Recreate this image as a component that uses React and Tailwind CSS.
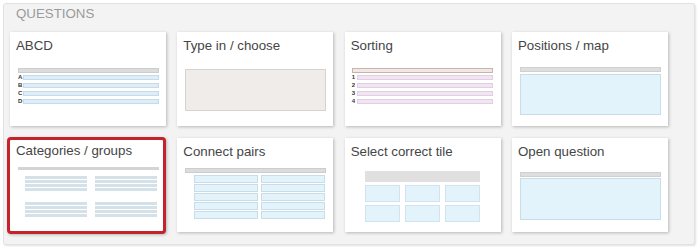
const FONT = { fontFamily: '"Liberation Sans", Arial, sans-serif' };

function Card({ title, selected, children }) {
  return (
    <div
      className={
        selected
          ? "ml-[-3px] mt-[-1px] w-[159px] h-[97px] bg-white border-[3px] border-[#c4232b] rounded-[4px] shadow-[1px_1px_3px_rgba(0,0,0,0.25)]"
          : "h-[94px] bg-white shadow-[1px_1px_3px_rgba(0,0,0,0.25)]"
      }
    >
      <div className={`pl-[6px] ${selected ? "pt-[3px]" : "pt-[6px]"} text-[13.3px] leading-[16px] text-[#454545]`}>
        {title}
      </div>
      {children}
    </div>
  );
}

function Rows({ labels, fill }) {
  return (
    <div className="flex flex-col gap-[3px] mt-[2px]">
      {labels.map((l) => (
        <div key={l} className="flex items-center h-[5px]">
          <span className="w-[5px] text-[6px] leading-[5px] font-bold text-[#333]">{l}</span>
          <div className={`flex-1 h-[5px] border ${fill}`} />
        </div>
      ))}
    </div>
  );
}

function Abcd() {
  return (
    <div className="ml-[8px] w-[141px] mt-[14px]">
      <div className="h-[5px] bg-[#dcdcdc] border border-[#cdcdcd]" />
      <Rows labels={["A", "B", "C", "D"]} fill="bg-[#deedf8] border-[#c6dbe9]" />
    </div>
  );
}

function TypeIn() {
  return <div className="ml-[8px] w-[141px] mt-[15px] h-[42px] bg-[#f0ece9] border border-[#d6d2ce]" />;
}

function Sorting() {
  return (
    <div className="ml-[7px] w-[141px] mt-[14px]">
      <div className="h-[5px] bg-[#efe9e6] border border-[#c9b3aa]" />
      <Rows labels={["1", "2", "3", "4"]} fill="bg-[#f2e4f2] border-[#dfcfe0]" />
    </div>
  );
}

function Positions() {
  return (
    <div className="ml-[8px] w-[141px] mt-[13px]">
      <div className="h-[5px] bg-[#dedede] border border-[#d0d0d0]" />
      <div className="mt-[2px] h-[41px] bg-[#e3f3fc] border border-[#c9dde9]" />
    </div>
  );
}

function Group() {
  return (
    <div className="flex flex-col gap-[1px] w-[62px]">
      {[0, 1, 2, 3].map((i) => (
        <div key={i} className="h-[3px] bg-[#d5e1e8]" />
      ))}
    </div>
  );
}

function Categories() {
  return (
    <div className="ml-[8px] w-[141px] mt-[8px]">
      <div className="h-[3px] bg-[#d4d4d4]" />
      <div className="flex gap-[8px] ml-[7px] mt-[6px]">
        <Group />
        <Group />
      </div>
      <div className="flex gap-[8px] ml-[7px] mt-[11px]">
        <Group />
        <Group />
      </div>
    </div>
  );
}

function Pairs() {
  return (
    <div className="ml-[8px] w-[141px] mt-[8px]">
      <div className="h-[5px] bg-[#dcdcdc] border border-[#cdcdcd]" />
      <div className="grid grid-cols-2 gap-x-[3px] gap-y-[1px] ml-[9px] w-[131px] mt-[2px]">
        {Array.from({ length: 10 }).map((_, i) => (
          <div key={i} className="h-[8px] bg-[#e3f3fc] border border-[#c9dde9]" />
        ))}
      </div>
    </div>
  );
}

function Tiles() {
  return (
    <div className="ml-[20px] w-[115px] mt-[11px]">
      <div className="h-[11px] bg-[#e0e0e0]" />
      <div className="grid grid-cols-3 gap-x-[5px] gap-y-[3px] mt-[3px]">
        {Array.from({ length: 6 }).map((_, i) => (
          <div key={i} className="h-[17px] bg-[#e3f3fc] border border-[#d0e3ee]" />
        ))}
      </div>
    </div>
  );
}

function Open() {
  return (
    <div className="ml-[8px] w-[141px] mt-[12px]">
      <div className="h-[5px] bg-[#dedede] border border-[#d0d0d0]" />
      <div className="mt-[1px] h-[42px] bg-[#e3f3fc] border border-[#c9dde9]" />
    </div>
  );
}

export default function App() {
  return (
    <div className="w-[700px] h-[249px] bg-white pt-[3px] pl-[3px]" style={FONT}>
      <div className="w-[692px] h-[242px] bg-[#f3f3f3] border border-[#e2e2e2] rounded-[3px] shadow-[1px_1px_2px_rgba(0,0,0,0.12)]">
        <div className="pl-[12px] pt-[2px] text-[13.3px] leading-[16px] text-[#9a9a9a]">QUESTIONS</div>
        <div className="mt-[10px] pl-[6px] w-[664px] grid grid-cols-4 gap-x-[11.33px] gap-y-[12px]">
          <Card title="ABCD"><Abcd /></Card>
          <Card title="Type in / choose"><TypeIn /></Card>
          <Card title="Sorting"><Sorting /></Card>
          <Card title="Positions / map"><Positions /></Card>
          <Card title="Categories / groups" selected><Categories /></Card>
          <Card title="Connect pairs"><Pairs /></Card>
          <Card title="Select correct tile"><Tiles /></Card>
          <Card title="Open question"><Open /></Card>
        </div>
      </div>
    </div>
  );
}
